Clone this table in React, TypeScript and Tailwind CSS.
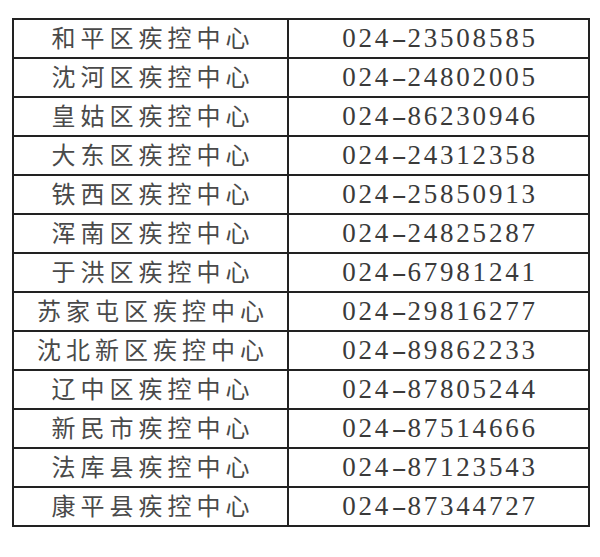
const rows = [
  ['和平区疾控中心', '024-23508585'],
  ['沈河区疾控中心', '024-24802005'],
  ['皇姑区疾控中心', '024-86230946'],
  ['大东区疾控中心', '024-24312358'],
  ['铁西区疾控中心', '024-25850913'],
  ['浑南区疾控中心', '024-24825287'],
  ['于洪区疾控中心', '024-67981241'],
  ['苏家屯区疾控中心', '024-29816277'],
  ['沈北新区疾控中心', '024-89862233'],
  ['辽中区疾控中心', '024-87805244'],
  ['新民市疾控中心', '024-87514666'],
  ['法库县疾控中心', '024-87123543'],
  ['康平县疾控中心', '024-87344727'],
]

export default function App() {
  return (
    <div className="w-[600px] h-[557px] bg-white pt-[18px] pl-[12px]">
      <table className="border-collapse border-2 border-[#222] w-[576px] table-fixed">
        <colgroup>
          <col className="w-[275px]" />
          <col className="w-[301px]" />
        </colgroup>
        <tbody>
          {rows.map(([name, phone]) => {
            const [area, num] = phone.split('-')
            return (
              <tr key={name} className="h-[39px]">
                <td className="border-2 border-[#222] p-0 text-center align-middle">
                  <span className="pl-[5px] text-[24px] leading-none tracking-[5px] text-[#4a4a4a] font-['Noto_Sans_CJK_SC',sans-serif]">
                    {name}
                  </span>
                </td>
                <td className="border-2 border-[#222] p-0 text-center align-middle">
                  <span className="pl-[3px] text-[27px] leading-none tracking-[2.8px] text-[#3a3a3a] font-['Liberation_Serif',serif] tabular-nums">
                    {area}
                    <span className="inline-block w-[16.3px] text-center tracking-normal scale-x-[1.7]">-</span>
                    {num}
                  </span>
                </td>
              </tr>
            )
          })}
        </tbody>
      </table>
    </div>
  )
}
